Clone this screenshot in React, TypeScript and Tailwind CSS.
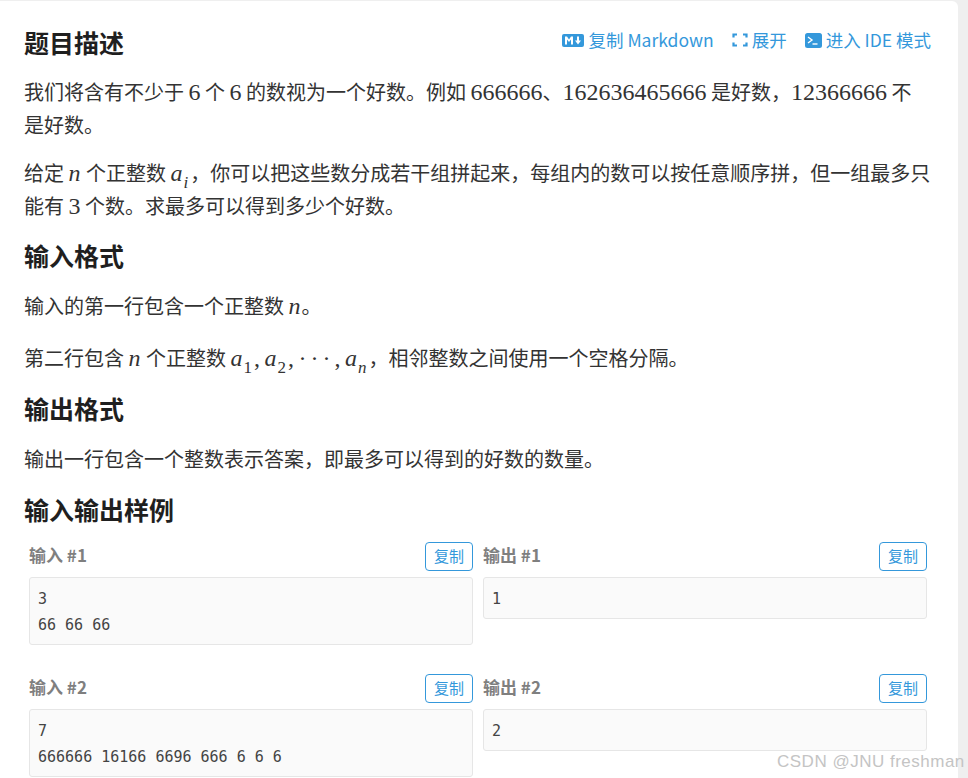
const sans = { fontFamily: '"Noto Sans CJK SC", "Noto Sans", sans-serif' }

function M({ children }: { children: React.ReactNode }) {
  return <span className="font-['Liberation_Serif',serif] text-[24px] leading-none">{children}</span>
}

function V({ children, sub, italicSub }: { children: string; sub?: string; italicSub?: boolean }) {
  return (
    <span className="font-['Liberation_Serif',serif] text-[24px] leading-none">
      <i className="pr-[1px]">{children}</i>
      {sub && (
        <sub className={`pr-[2px] text-[17px] align-[-3px] leading-none ${italicSub ? 'italic' : ''}`}>{sub}</sub>
      )}
    </span>
  )
}

function H2({ children }: { children: React.ReactNode }) {
  return <h2 className="text-[25px] font-bold leading-[34px] text-[#1f1f1f]">{children}</h2>
}

function P({ children }: { children: React.ReactNode }) {
  return <p className="text-[20px] leading-[33px] text-[#333]">{children}</p>
}

function Sample({ label, text }: { label: string; text: string }) {
  return (
    <div className="w-[444px]">
      <div className="flex h-[29px] items-center justify-between">
        <span className="mb-[3px] text-[17px] font-bold text-[#7f7f7f]">{label}</span>
        <button className="flex h-[29px] w-[48px] items-center justify-center rounded-[4px] border border-[#3498db] text-[15px] text-[#3498db]">
          复制
        </button>
      </div>
      <pre className="mt-[6px] rounded-[3px] border border-[#e6e6e6] bg-[#fafafa] px-[8px] pb-[6px] pt-[8px] font-['DejaVu_Sans_Mono',monospace] text-[15px] font-light leading-[26px] text-[#444]">
        {text}
      </pre>
    </div>
  )
}

function Row({ n, input, output }: { n: number; input: string; output: string }) {
  return (
    <div className="ml-[5px] flex items-start gap-[10px]">
      <Sample label={`输入 #${n}`} text={input} />
      <Sample label={`输出 #${n}`} text={output} />
    </div>
  )
}

export default function App() {
  return (
    <div className="relative h-[778px] w-[968px] overflow-hidden bg-[#efefef]" style={sans}>
      <div className="mt-px h-[790px] w-[958px] rounded-tr-[6px] bg-white pl-[24px] pr-[27px] pt-[24px]">
        <div className="flex items-center justify-between">
          <H2>题目描述</H2>
          <div className="mb-[4px] flex items-center text-[17.5px] text-[#3498db]">
            <svg width="22" height="13" viewBox="0 0 22 13" className="mr-[4px]">
              <rect width="22" height="13" rx="2" fill="#3498db" />
              <path d="M3 10.5V2.5h2l2 3 2-3h2v8H9v-5L7 8 5 5.5v5z" fill="#fff" />
              <path d="M15 2.500h2v4h2l-3 4-3-4h2z" fill="#fff" />
            </svg>
            <span>复制 Markdown</span>
            <svg width="16" height="14" viewBox="0 0 16 14" className="ml-[18px] mr-[4px]" fill="none" stroke="#3498db" strokeWidth="2.2">
              <path d="M5 1.500H1.500V4.500M11 1.500h3.500V4.500M5 12.500H1.500V9.500M11 12.500h3.500V9.500" />
            </svg>
            <span>展开</span>
            <svg width="17" height="15" viewBox="0 0 17 15" className="ml-[18px] mr-[4px]">
              <rect width="17" height="15" rx="2.500" fill="#3498db" />
              <path d="M3 4 7 7 3 10" stroke="#fff" strokeWidth="1.400" fill="none" />
              <path d="M7.500 11h5" stroke="#fff" strokeWidth="1.400" />
            </svg>
            <span>进入 IDE 模式</span>
          </div>
        </div>

        <div className="mt-[16px] flex flex-col gap-[15px]">
          <P>
            我们将含有不少于 <M>6</M> 个 <M>6</M> 的数视为一个好数。例如 <M>666666</M>、<M>162636465666</M> 是好数，<M>12366666</M> 不是好数。
          </P>
          <P>
            给定 <V>n</V> 个正整数 <V sub="i" italicSub>a</V>，你可以把这些数分成若干组拼起来，每组内的数可以按任意顺序拼，但一组最多只能有 <M>3</M> 个数。求最多可以得到多少个好数。
          </P>
        </div>

        <div className="mt-[16px]"><H2>输入格式</H2></div>
        <div className="mt-[17px] flex flex-col gap-[19px]">
          <P>输入的第一行包含一个正整数 <V>n</V>。</P>
          <P>
            第二行包含 <V>n</V> 个正整数 <V sub="1">a</V><M>,</M> <V sub="2">a</V><M>,</M> <span className="font-['Liberation_Serif',serif] text-[24px] leading-none tracking-[4px]">···</span><M>,</M> <V sub="n" italicSub>a</V>，相邻整数之间使用一个空格分隔。
          </P>
        </div>

        <div className="mt-[17px]"><H2>输出格式</H2></div>
        <div className="mt-[17px]">
          <P>输出一行包含一个整数表示答案，即最多可以得到的好数的数量。</P>
        </div>

        <div className="mt-[17px]"><H2>输入输出样例</H2></div>
        <div className="mt-[16px] flex flex-col gap-[29px]">
          <Row n={1} input={'3\n66 66 66'} output="1" />
          <Row n={2} input={'7\n666666 16166 6696 666 6 6 6'} output="2" />
        </div>
      </div>
      <span className="absolute left-[777px] top-[749px] font-['Liberation_Sans',sans-serif] text-[17px] tracking-[0.5px] text-[#c4c4c4]">
        CSDN @JNU freshman
      </span>
    </div>
  )
}
